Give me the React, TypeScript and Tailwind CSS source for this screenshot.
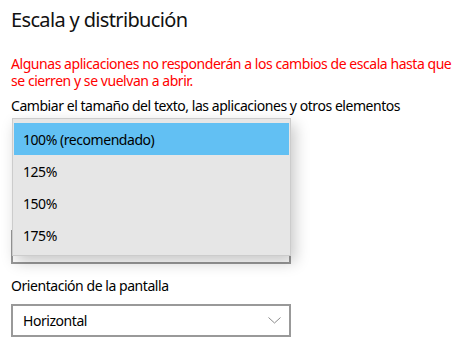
import React from "react";

const SCALES = ["100% (recomendado)", "125%", "150%", "175%"];

function Chevron() {
  return (
    <svg width="13" height="7" viewBox="0 0 13 7" fill="none" aria-hidden>
      <path d="M0.5 0.5 L6.5 6 L12.5 0.5" stroke="#8a8a8a" strokeWidth="1" />
    </svg>
  );
}

export default function App() {
  return (
    <div className="relative h-[353px] w-[472px] overflow-hidden bg-white pl-[11px] font-['Noto_Sans','Open_Sans',sans-serif] text-[14px] tracking-[-0.45px] text-[#000]">
      <h1 className="pt-[6px] text-[20px] leading-[28px] tracking-[-0.65px] text-[#111]">Escala y distribución</h1>

      <p className="mt-[21px] w-[446px] leading-[17px] text-[#ff0000]">
        Algunas aplicaciones no responderán a los cambios de escala hasta que se cierren y se vuelvan a abrir.
      </p>

      <p className="mt-[7px] leading-[20px]">
        Cambiar el tamaño del texto, las aplicaciones y otros elementos
      </p>

      {/* combo con la lista desplegada encima */}
      <div className="relative mt-[2px] h-[146px] w-[280px]">
        <div className="absolute bottom-0 left-0 h-[34px] w-[280px] border-2 border-[#999]" />
        <div className="absolute left-[1px] top-0 h-[138px] w-[279px] border border-[#cccccc] bg-[#e6e6e6] px-[1px] pt-[4px] shadow-[4px_6px_14px_rgba(0,0,0,0.22)]">
          {SCALES.map((s, i) => (
            <div
              key={s}
              className={
                i === 0
                  ? "flex h-[32px] items-center bg-[#62c0f3] pl-[9px]"
                  : "flex h-[32px] items-center pl-[9px]"
              }
            >
              {s}
            </div>
          ))}
        </div>
      </div>

      <p className="mt-[12px] leading-[20px]">Orientación de la pantalla</p>

      <div className="mt-[8px] flex h-[33px] w-[280px] items-center justify-between border-2 border-[#999] pl-[10px] pr-[8px]">
        <span>Horizontal</span>
        <Chevron />
      </div>
    </div>
  );
}
